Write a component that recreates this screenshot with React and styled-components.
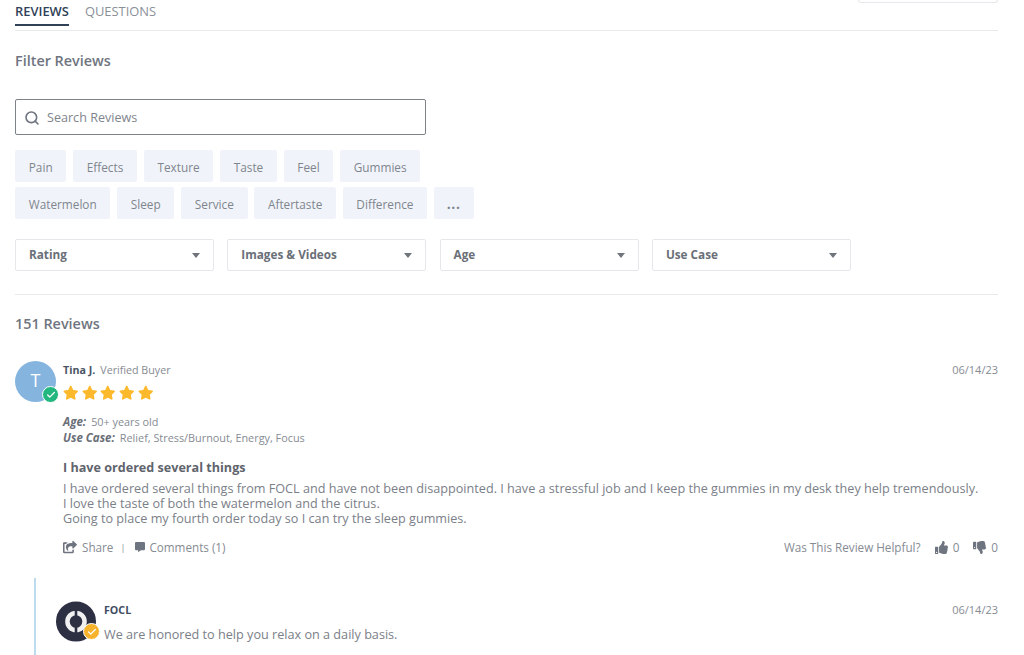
import React from 'react';
import styled, { createGlobalStyle } from 'styled-components';
import { Search, Check } from 'lucide-react';
import { FaShareSquare, FaCommentAlt, FaThumbsUp, FaThumbsDown, FaStar } from 'react-icons/fa';

const GlobalStyle = createGlobalStyle`
  html, body {
    margin: 0;
    height: 655px;
    overflow: hidden;
    background: #fff;
    font-family: "Open Sans", "Liberation Sans", sans-serif;
    color: #6f7580;
  }
  * { box-sizing: border-box; }
`;

const Page = styled.div`
  width: 983px;
  margin-left: 15px;
`;

const TabBar = styled.div`
  display: flex;
  justify-content: space-between;
  align-items: flex-start;
  height: 31px;
  border-bottom: 1px solid #e8e9eb;
`;

const Tabs = styled.div`
  display: flex;
  gap: 16px;
`;

const Tab = styled.div`
  height: 26px;
  padding-top: 2px;
  font-size: 12.9px;
  line-height: 18px;
  font-weight: ${(p) => (p.$active ? 600 : 400)};
  color: ${(p) => (p.$active ? '#2f4258' : '#8a8f98')};
  border-bottom: ${(p) => (p.$active ? '2px solid #2f4258' : 'none')};
`;

const SortBox = styled.div`
  width: 140px;
  height: 3px;
  border: 1px solid #e6e7ea;
  border-top: none;
  border-radius: 0 0 3px 3px;
`;

const Heading = styled.h2`
  margin: 0;
  font-size: 14.4px;
  line-height: 20px;
  font-weight: 600;
  color: #6f7580;
`;

const FilterHeading = styled(Heading)`
  margin-top: 20px;
`;

const SearchBox = styled.div`
  display: flex;
  align-items: center;
  gap: 7px;
  width: 411px;
  height: 36px;
  margin-top: 28px;
  padding: 1px 0 0 8px;
  border: 1px solid #7d8188;
  border-radius: 2px;
  font-size: 12.6px;
  color: #80858d;
`;

const Chips = styled.div`
  display: flex;
  flex-direction: column;
  gap: 5px;
  margin-top: 15px;
`;

const ChipRow = styled.div`
  display: flex;
  gap: 6.6px;
`;

const Chip = styled.div`
  height: 32px;
  padding: 1px 13.75px 0;
  display: flex;
  align-items: center;
  font-size: 11.8px;
  color: #80858d;
  background: #f0f4fa;
  border-radius: 2px;
`;

const MoreChip = styled(Chip)`
  width: 40px;
  padding: 1px 0 0 13px;
  font-size: 14px;
  font-weight: 700;
  letter-spacing: 0.6px;
`;

const Dropdowns = styled.div`
  display: flex;
  gap: 13.3px;
  margin-top: 20px;
`;

const Dropdown = styled.div`
  width: 199px;
  height: 32px;
  padding: 0 13px 2px;
  display: flex;
  align-items: center;
  justify-content: space-between;
  border: 1px solid #e6e7ea;
  border-radius: 2px;
  font-size: 11.75px;
  font-weight: 700;
  color: #6a6f78;
`;

const Caret = styled.span`
  width: 0;
  height: 0;
  margin-top: 2px;
  border-left: 4px solid transparent;
  border-right: 4px solid transparent;
  border-top: 5px solid #70757d;
`;

const Divider = styled.div`
  height: 1px;
  margin-top: 23px;
  background: #e8e9eb;
`;

const CountHeading = styled(Heading)`
  margin-top: 19px;
`;

const Review = styled.div`
  display: flex;
  gap: 7px;
  margin-top: 27px;
`;

const Avatar = styled.div`
  position: relative;
  flex: none;
  width: 41px;
  height: 41px;
  padding-bottom: 3px;
  display: flex;
  align-items: center;
  justify-content: center;
  border-radius: 50%;
  background: #85b5de;
  color: #fff;
  font-size: 18px;
`;

const Badge = styled.span`
  position: absolute;
  right: -3px;
  bottom: -1px;
  width: 17px;
  height: 17px;
  display: flex;
  align-items: center;
  justify-content: center;
  border-radius: 50%;
  border: 1.5px solid #fff;
  background: ${(p) => p.$color};
  color: #fff;
`;

const LogoBadge = styled(Badge)`
  right: -4px;
  bottom: 2px;
`;

const Content = styled.div`
  flex: 1;
  min-width: 0;
`;

const TopLine = styled.div`
  display: flex;
  justify-content: space-between;
  font-size: 10.7px;
  line-height: 18px;
`;

const Author = styled.span`
  font-weight: 700;
  color: #4a5464;
  margin-right: 5px;
`;

const Muted = styled.span`
  color: #868b93;
`;

const DateText = styled(Muted)`
  font-size: 11px;
`;

const Stars = styled.div`
  display: flex;
  gap: 3.2px;
  margin-top: 6px;
  color: #fdb92c;
  font-size: 15.5px;
  height: 16px;
`;

const Meta = styled.div`
  margin-top: 13px;
  font-size: 10.85px;
  line-height: 16px;
  color: #868b93;
`;

const MetaLabel = styled.b`
  font-style: italic;
  font-size: 11.5px;
  font-weight: 700;
  color: #6a6f78;
  margin-right: 5px;
`;

const Title = styled.h3`
  margin: 13px 0 0;
  font-size: 12.6px;
  line-height: 18px;
  font-weight: 700;
  color: #5f646d;
`;

const Body = styled.p`
  margin: 4px 0 0;
  font-size: 12.65px;
  line-height: 15px;
  color: #7b8088;
`;

const Actions = styled.div`
  display: flex;
  justify-content: space-between;
  align-items: center;
  margin-top: 12px;
  height: 18px;
  font-size: 11.7px;
  color: #868b93;
`;

const ActionGroup = styled.div`
  display: flex;
  align-items: center;
`;

const ActionIcon = styled.span`
  display: flex;
  margin-right: ${(p) => p.$gap || 5}px;
  color: #6f7580;
`;

const Pipe = styled.span`
  margin: 0 10px 0 7px;
  font-size: 9px;
`;

const Vote = styled.div`
  display: flex;
  align-items: center;
  margin-left: 14px;
`;

const Reply = styled.div`
  display: flex;
  margin: 22px 0 0 19px;
  padding: 23px 0 0 20px;
  height: 78px;
  border-left: 2px solid #bcdcee;
  gap: 8px;
`;

const LogoWrap = styled.div`
  position: relative;
  flex: none;
  width: 40px;
  height: 41px;
`;

const ReplyAuthor = styled.div`
  font-size: 10.7px;
  font-weight: 700;
  color: #3f4e62;
`;

const ReplyText = styled.div`
  margin-top: 6px;
  font-size: 12.65px;
  line-height: 18px;
  color: #7b8088;
`;

const tagRows = [
  ['Pain', 'Effects', 'Texture', 'Taste', 'Feel', 'Gummies'],
  ['Watermelon', 'Sleep', 'Service', 'Aftertaste', 'Difference'],
];

const filters = ['Rating', 'Images & Videos', 'Age', 'Use Case'];

const FoclLogo = () => (
  <svg width="40" height="41" viewBox="0 0 40 41">
    <circle cx="20" cy="20.5" r="11" fill="#f1f1f2" />
    <circle cx="20" cy="20.5" r="15.4" fill="none" stroke="#2d3043" strokeWidth="9.2" />
    <rect x="18.7" y="6" width="2.6" height="29" fill="#2d3043" />
    <circle cx="20" cy="20.5" r="6.3" fill="#2d3043" />
  </svg>
);

export default function App() {
  return (
    <Page>
      <GlobalStyle />
      <TabBar>
        <Tabs>
          <Tab $active>REVIEWS</Tab>
          <Tab>QUESTIONS</Tab>
        </Tabs>
        <SortBox />
      </TabBar>

      <FilterHeading>Filter Reviews</FilterHeading>
      <SearchBox>
        <Search size={16} strokeWidth={2.4} color="#6f7580" />
        Search Reviews
      </SearchBox>

      <Chips>
        {tagRows.map((row, i) => (
          <ChipRow key={row[0]}>
            {row.map((tag) => (
              <Chip key={tag}>{tag}</Chip>
            ))}
            {i === 1 && <MoreChip>...</MoreChip>}
          </ChipRow>
        ))}
      </Chips>

      <Dropdowns>
        {filters.map((f) => (
          <Dropdown key={f}>
            {f}
            <Caret />
          </Dropdown>
        ))}
      </Dropdowns>

      <Divider />
      <CountHeading>151 Reviews</CountHeading>

      <Review>
        <Avatar>
          T
          <Badge $color="#22b77f">
            <Check size={10} strokeWidth={3} />
          </Badge>
        </Avatar>
        <Content>
          <TopLine>
            <span>
              <Author>Tina J.</Author>
              <Muted>Verified Buyer</Muted>
            </span>
            <DateText>06/14/23</DateText>
          </TopLine>
          <Stars>
            {[1, 2, 3, 4, 5].map((n) => (
              <FaStar key={n} />
            ))}
          </Stars>
          <Meta>
            <div>
              <MetaLabel>Age:</MetaLabel>50+ years old
            </div>
            <div>
              <MetaLabel>Use Case:</MetaLabel>Relief, Stress/Burnout, Energy, Focus
            </div>
          </Meta>
          <Title>I have ordered several things</Title>
          <Body>
            I have ordered several things from FOCL and have not been disappointed. I have a stressful job and I keep the gummies in my desk they help tremendously.
            <br />
            I love the taste of both the watermelon and the citrus.
            <br />
            Going to place my fourth order today so I can try the sleep gummies.
          </Body>
          <Actions>
            <ActionGroup>
              <ActionIcon>
                <FaShareSquare size={14} />
              </ActionIcon>
              Share
              <Pipe>|</Pipe>
              <ActionIcon $gap={4}>
                <FaCommentAlt size={10} />
              </ActionIcon>
              Comments (1)
            </ActionGroup>
            <ActionGroup>
              Was This Review Helpful?
              <Vote>
                <ActionIcon>
                  <FaThumbsUp size={13} />
                </ActionIcon>
                0
              </Vote>
              <Vote>
                <ActionIcon>
                  <FaThumbsDown size={13} />
                </ActionIcon>
                0
              </Vote>
            </ActionGroup>
          </Actions>
        </Content>
      </Review>

      <Reply>
        <LogoWrap>
          <FoclLogo />
          <LogoBadge $color="#f7b32b">
            <Check size={10} strokeWidth={3} />
          </LogoBadge>
        </LogoWrap>
        <Content>
          <TopLine>
            <ReplyAuthor>FOCL</ReplyAuthor>
            <DateText>06/14/23</DateText>
          </TopLine>
          <ReplyText>We are honored to help you relax on a daily basis.</ReplyText>
        </Content>
      </Reply>
    </Page>
  );
}
